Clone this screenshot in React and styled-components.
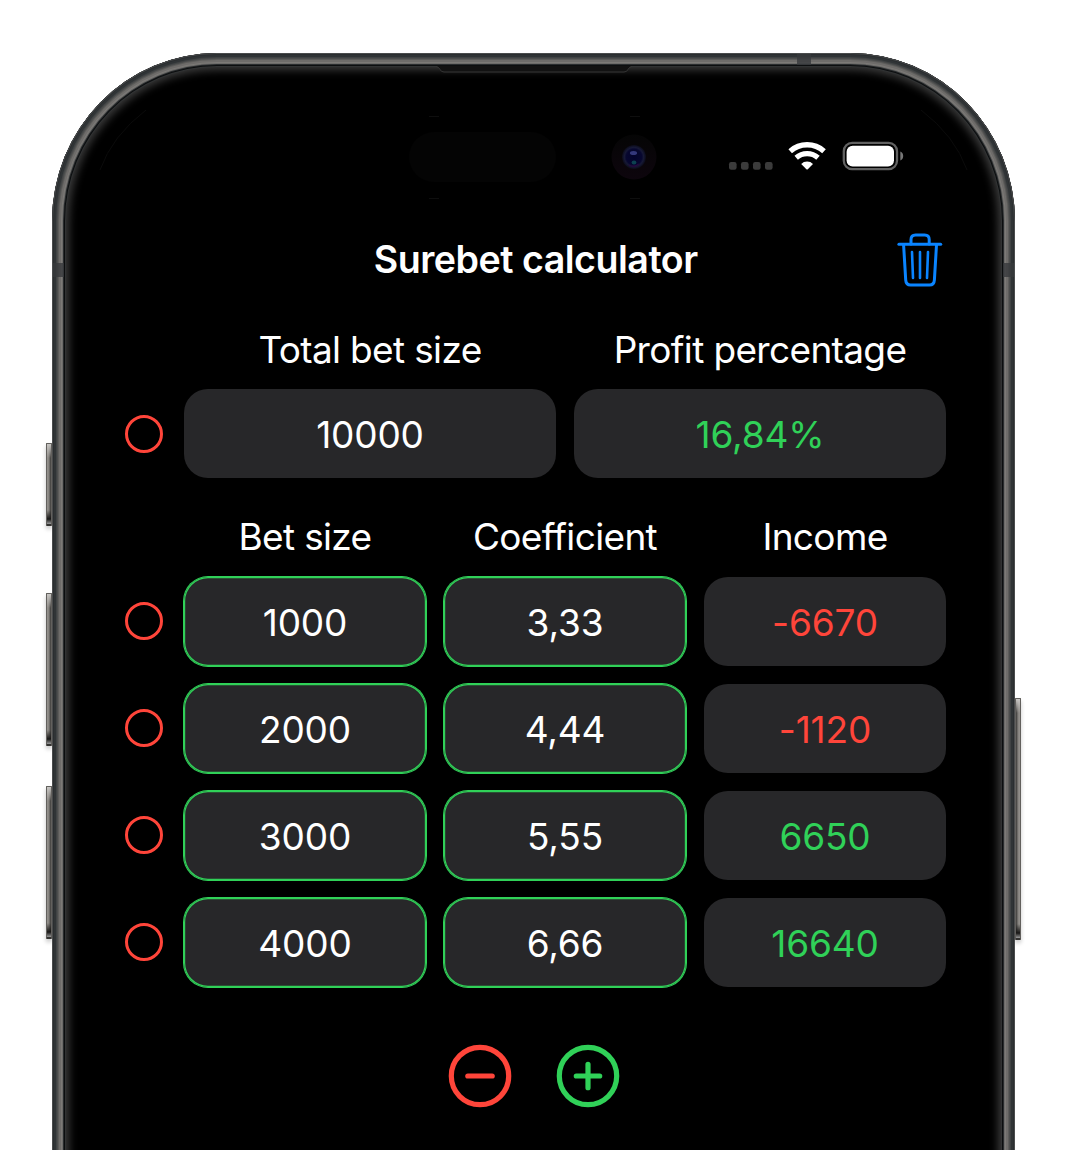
import React from "react";
import styled, { createGlobalStyle } from "styled-components";

const RED = "#ff453a";
const GREEN = "#30d158";
const BLUE = "#0a84ff";

const GlobalStyle = createGlobalStyle`
  html, body { margin: 0; background: #fff; }
  * { box-sizing: border-box; }
`;

const Stage = styled.main`
  width: 1069px;
  height: 1150px;
  padding: 53px 54px 0 52px;
  overflow: hidden;
  background: #fff;
  font-family: Inter, "Liberation Sans", sans-serif;
  font-variant-ligatures: none;
  color: #fff;
`;

const Phone = styled.div`
  position: relative;
  height: 1097px;
`;

const Shell = styled.div`
  position: relative;
  height: 1097px;
  overflow: hidden;
  border-radius: 165px 165px 0 0 / 168px 168px 0 0;
`;

const Bezel = styled.div`
  position: absolute;
  inset: 0 0 -60px;
  border-radius: 165px 165px 0 0 / 168px 168px 0 0;
  background: #000;
  box-shadow:
    inset 0 0 0 1px #4a4c4d,
    inset 0 0 0 2px #2b2e30,
    inset 0 0 0 4px #303436,
    inset 0 0 0 5px #404344,
    inset 0 0 0 6px #4c4d4d,
    inset 0 0 0 7px #5c5c5a,
    inset 0 0 0 9px #6e6c6a,
    inset 0 0 0 10px #7c7a77,
    inset 0 0 0 11px #6c6b69,
    inset 0 0 0 12px #292c2e,
    inset 0 0 0 13px #0c0e0f,
    inset 0 0 0 14px #303233,
    inset 0 0 8px 17px #3b3b3b;
`;

const Band = styled.i`
  position: absolute;
  left: ${(p) => p.$x}px;
  top: ${(p) => p.$y}px;
  width: ${(p) => p.$w}px;
  height: ${(p) => p.$h}px;
  background: rgba(55, 57, 60, 0.8);
`;

const SideKey = styled.i`
  position: absolute;
  top: ${(p) => p.$top}px;
  ${(p) => p.$side}: -6px;
  width: 6px;
  height: ${(p) => p.$h}px;
  border-radius: 1px;
  border: 1px solid #62605d;
  border-bottom: 2px solid #343331;
  background:
    linear-gradient(#c9c7c4 0, transparent 14px, transparent calc(100% - 14px), #171615 calc(100% - 5px), #999 100%),
    linear-gradient(${(p) => (p.$side === "left" ? "90deg" : "270deg")}, #97948f, #85827e 45%, #3a3937);
  box-shadow: 0 3px 4px rgba(0, 0, 0, 0.22);
`;

const Speaker = styled.svg`
  position: absolute;
  left: 383px;
  top: 12px;
`;

const Sensors = styled.svg`
  position: absolute;
  left: 348px;
  top: 58px;
`;

const Glints = styled.svg`
  position: absolute;
  left: 0;
  top: 0;
`;

const Screen = styled.div`
  position: relative;
  display: flex;
  flex-direction: column;
  padding: 85px 69px 0 73.4px;
`;

const StatusBar = styled.div`
  display: flex;
  justify-content: flex-end;
  align-items: center;
  height: 36px;
  padding-right: 42px;
`;

const Header = styled.header`
  display: grid;
  grid-template-columns: 1fr auto 1fr;
  align-items: center;
  height: 66px;
  margin-top: 53px;
  padding-right: 3px;
  padding-left: 3px;
`;

const Title = styled.h1`
  grid-column: 2;
  margin: 0;
  font-size: 37.6px;
  line-height: 48px;
  font-weight: 600;
  letter-spacing: -0.5px;
  white-space: nowrap;
`;

const IconButton = styled.button`
  display: flex;
  justify-self: end;
  padding: 0;
  border: 0;
  background: none;
`;

const Labels = styled.div`
  display: grid;
  grid-template-columns: repeat(${(p) => p.$cols}, 1fr);
  column-gap: 18px;
  margin-left: 58.6px;
  margin-top: ${(p) => p.$mt}px;
  height: 50px;
  align-items: center;
  text-align: center;
`;

const Label = styled.span`
  font-size: 37px;
  line-height: 50px;
  font-weight: 400;
  letter-spacing: -0.65px;
  white-space: nowrap;
`;

const Rows = styled.div`
  display: flex;
  flex-direction: column;
  gap: 18px;
  margin-top: ${(p) => p.$mt}px;
`;

const Row = styled.div`
  display: grid;
  grid-template-columns: 38px 1fr;
  column-gap: 20.6px;
  align-items: center;
  height: 89px;
`;

const Radio = styled.button`
  width: 38px;
  height: 38px;
  padding: 0;
  border: 3px solid ${RED};
  border-radius: 50%;
  background: none;
`;

const Cells = styled.div`
  display: grid;
  grid-template-columns: repeat(${(p) => p.$cols}, 1fr);
  column-gap: 18px;
  height: 89px;
`;

const Cell = styled.div`
  display: flex;
  align-items: center;
  justify-content: center;
  border-radius: 24px;
  padding-top: 2px;
  background: #272729;
  color: ${(p) => p.$color || "#fff"};
  font-size: 37px;
  letter-spacing: -0.15px;
  ${(p) => p.$editable && `box-shadow: inset 0 0 0 1.2px ${GREEN}, 0 0 0 1px ${GREEN};`}
`;

const Actions = styled.div`
  display: flex;
  justify-content: center;
  gap: 44px;
  margin: 57px 3.4px 0 0;
`;

const Trash = () => (
  <svg width="46" height="54" viewBox="0 0 46 54" fill="none" stroke={BLUE} strokeWidth="3" strokeLinecap="round" strokeLinejoin="round">
    <path d="M1.9 11.2H43.7" />
    <path d="M14 11V6.6Q14 2 18.6 2H27.6Q32.2 2 32.2 6.6V11" />
    <path d="M6.6 12L8.7 46.8Q9 52 13.6 52H32.5Q37.1 52 37.4 46.8L39.5 12" />
    <path d="M15 19L16 45M23 19V45M31 19L30 45" strokeWidth="2.6" />
  </svg>
);

const StatusIcons = () => (
  <svg width="176" height="36" viewBox="0 0 176 36">
    {[0, 12, 24, 36].map((x) => (
      <rect key={x} x={x + 1} y="24" width="7.6" height="7.8" rx="2.2" fill="#3b3b3b" />
    ))}
    <g fill="none" stroke="#fff" strokeWidth="5.4">
      <path d="M62.2 13.2A25.5 25.5 0 0 1 96 13.2" />
      <path d="M68.2 19.8A16.5 16.5 0 0 1 90 19.8" strokeWidth="5.2" />
    </g>
    <path d="M73.2 25.9A8.4 8.4 0 0 1 85 25.9L79.8 31.2Q79.1 31.9 78.4 31.2Z" fill="#fff" />
    <rect x="115.8" y="4.8" width="53.2" height="26.4" rx="8.4" fill="none" stroke="#626262" strokeWidth="2.3" />
    <rect x="118.6" y="7.7" width="47.4" height="20.8" rx="6" fill="#fff" />
    <path d="M172.3 13.6Q175.2 14.8 175.2 18Q175.2 21.2 172.3 22.4Z" fill="#777" />
  </svg>
);

const RoundIcon = ({ color, plus }) => (
  <svg width="64" height="64" viewBox="0 0 64 64" fill="none" stroke={color} strokeLinecap="round">
    <circle cx="32" cy="32" r="28.7" strokeWidth="5.2" />
    <path d={plus ? "M20.3 32H43.7M32 20.3V43.7" : "M19.8 32H44.2"} strokeWidth="5.2" />
  </svg>
);

const bets = [
  { size: "1000", coef: "3,33", income: "-6670" },
  { size: "2000", coef: "4,44", income: "-1120" },
  { size: "3000", coef: "5,55", income: "6650" },
  { size: "4000", coef: "6,66", income: "16640" },
];

export default function App() {
  return (
    <Stage>
      <GlobalStyle />
      <Phone>
        <SideKey $side="left" $top={390} $h={83} />
        <SideKey $side="left" $top={540} $h={153} />
        <SideKey $side="left" $top={733} $h={153} />
        <SideKey $side="right" $top={645} $h={242} />
        <Shell>
          <Bezel />
          <Band $x={745} $y={1} $w={14} $h={11} />
          <Band $x={1} $y={210} $w={11} $h={14} />
          <Band $x={951} $y={210} $w={11} $h={14} />
          <Speaker width="198" height="9" viewBox="0 0 198 9">
            <path d="M1 1Q4 1.5 5 4Q6 6.6 9 6.6H189Q192 6.6 193 4Q194 1.5 197 1Z" fill="#121212" />
            <path d="M1 1.5Q4 2 5 4.4Q6 7 9 7H189Q192 7 193 4.4Q194 2 197 1.5" fill="none" stroke="#363636" />
          </Speaker>
          <Glints width="963" height="130" viewBox="0 0 963 130" fill="none" stroke="#101010" strokeWidth="0.7">
            <path d="M48 117Q60 83 94 57M915 117Q903 83 869 57" />
          </Glints>
          <Sensors width="290" height="96" viewBox="0 0 290 96">
            <defs>
              <radialGradient id="lens">
                <stop offset="0" stopColor="#03032c" />
                <stop offset="0.65" stopColor="#07072f" />
                <stop offset="0.8" stopColor="#171936" />
                <stop offset="1" stopColor="#0b0b18" />
              </radialGradient>
              <linearGradient id="ring" x2="0" y2="1">
                <stop stopColor="#050505" />
                <stop offset="1" stopColor="#0d050d" />
              </linearGradient>
            </defs>
            <rect x="9" y="21" width="147" height="50" rx="25" fill="#040404" />
            <circle cx="234" cy="46" r="22.5" fill="url(#ring)" />
            <circle cx="234" cy="46" r="12" fill="url(#lens)" />
            <ellipse cx="233.5" cy="42" rx="3.6" ry="2" fill="#34387c" />
            <ellipse cx="234" cy="51.5" rx="2.4" ry="2" fill="#0c4150" />
            <path d="M229 54Q234 57 239 53" fill="none" stroke="#26083f" strokeWidth="1.4" />
            <path d="M29 18.5M29 5.5H39M230 5.5H240M29 87.5H39M230 87.5H240" stroke="#111" strokeWidth="0.8" />
          </Sensors>
          <Screen>
            <StatusBar><StatusIcons /></StatusBar>
            <Header>
              <Title>Surebet calculator</Title>
              <IconButton aria-label="Clear"><Trash /></IconButton>
            </Header>
            <Labels $cols={2} $mt={32}>
              <Label>Total bet size</Label>
              <Label>Profit percentage</Label>
            </Labels>
            <Rows $mt={14.4}>
              <Row>
                <Radio aria-label="Fix total" />
                <Cells $cols={2}>
                  <Cell>10000</Cell>
                  <Cell $color={GREEN}>16,84%</Cell>
                </Cells>
              </Row>
            </Rows>
            <Labels $cols={3} $mt={34}>
              <Label>Bet size</Label>
              <Label>Coefficient</Label>
              <Label>Income</Label>
            </Labels>
            <Rows $mt={14.3}>
              {bets.map((b) => (
                <Row key={b.size}>
                  <Radio aria-label="Fix bet" />
                  <Cells $cols={3}>
                    <Cell $editable>{b.size}</Cell>
                    <Cell $editable>{b.coef}</Cell>
                    <Cell $color={b.income.startsWith("-") ? RED : GREEN}>{b.income}</Cell>
                  </Cells>
                </Row>
              ))}
            </Rows>
            <Actions>
              <IconButton aria-label="Remove row"><RoundIcon color={RED} /></IconButton>
              <IconButton aria-label="Add row"><RoundIcon color={GREEN} plus /></IconButton>
            </Actions>
          </Screen>
        </Shell>
      </Phone>
    </Stage>
  );
}
